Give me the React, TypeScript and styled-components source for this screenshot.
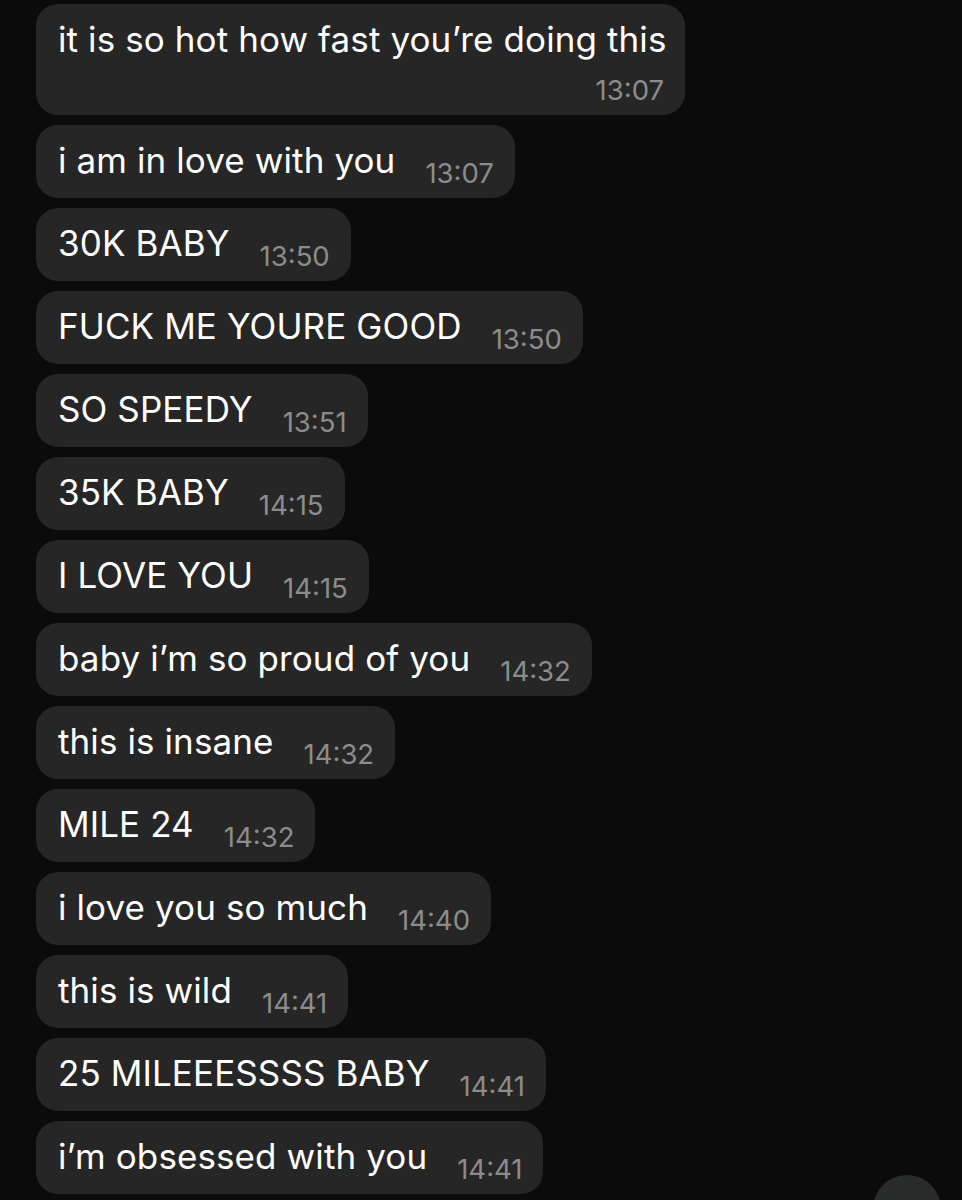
import React from "react";
import styled, { createGlobalStyle } from "styled-components";

const GlobalStyle = createGlobalStyle`
  html, body {
    margin: 0;
    padding: 0;
    background: #0b0b0b;
    height: 1200px;
    overflow: hidden;
  }
  body {
    font-family: Inter, "Liberation Sans", Arial, sans-serif;
    -webkit-font-smoothing: antialiased;
  }
`;

const Screen = styled.div`
  position: relative;
  width: 962px;
  height: 1200px;
  background: #0b0b0b;
  overflow: hidden;
`;

const Thread = styled.div`
  display: flex;
  flex-direction: column;
  align-items: flex-start;
  gap: 10px;
  padding: 4px 0 0 36px;
`;

/* Incoming message bubble: the time sits beside the text, or drops to its own
   right-aligned line when the text is too long to share the row. */
const Bubble = styled.div`
  display: flex;
  flex-wrap: wrap;
  align-items: flex-start;
  column-gap: 30px;
  max-width: 649px;
  box-sizing: border-box;
  padding: 15px 21px 10px 22px;
  background: #262626;
  border-radius: 22px;
`;

const Text = styled.span`
  margin-bottom: -2px;
  font-size: 35px;
  line-height: 40px;
  letter-spacing: 0.1px;
  color: #ffffff;
  white-space: nowrap;
`;

const Time = styled.span`
  margin-left: auto;
  margin-top: 18px;
  font-size: 27.5px;
  line-height: 30px;
  color: #8c8c8c;
  white-space: nowrap;
`;

/* Round "jump to latest" button, mostly below the fold */
const ScrollButton = styled.div`
  position: absolute;
  left: 873px;
  top: 1175px;
  width: 68px;
  height: 68px;
  border-radius: 50%;
  background: #2a2c2c;
`;

type Message = { text: string; time: string };

const messages: Message[] = [
  { text: "it is so hot how fast you’re doing this", time: "13:07" },
  { text: "i am in love with you", time: "13:07" },
  { text: "30K BABY", time: "13:50" },
  { text: "FUCK ME YOURE GOOD", time: "13:50" },
  { text: "SO SPEEDY", time: "13:51" },
  { text: "35K BABY", time: "14:15" },
  { text: "I LOVE YOU", time: "14:15" },
  { text: "baby i’m so proud of you", time: "14:32" },
  { text: "this is insane", time: "14:32" },
  { text: "MILE 24", time: "14:32" },
  { text: "i love you so much", time: "14:40" },
  { text: "this is wild", time: "14:41" },
  { text: "25 MILEEESSSS BABY", time: "14:41" },
  { text: "i’m obsessed with you", time: "14:41" },
];

export default function App() {
  return (
    <Screen>
      <GlobalStyle />
      <Thread>
        {messages.map((m, i) => (
          <Bubble key={i}>
            <Text>{m.text}</Text>
            <Time>{m.time}</Time>
          </Bubble>
        ))}
      </Thread>
      <ScrollButton />
    </Screen>
  );
}
